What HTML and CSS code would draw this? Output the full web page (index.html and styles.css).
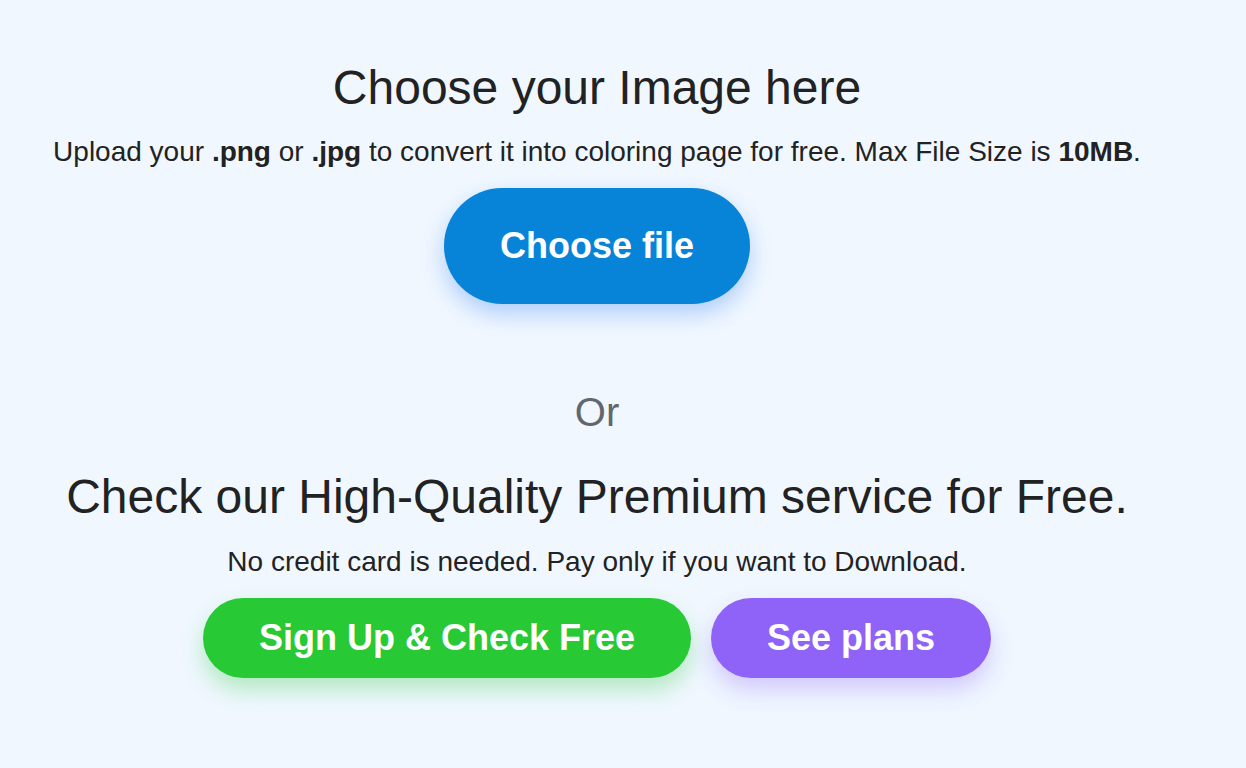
FILE: index.html
```html
<!DOCTYPE html>
<html lang="en">
<head>
<meta charset="utf-8">
<title>Choose your Image here</title>
<link rel="stylesheet" href="styles.css">
</head>
<body>
<main class="page">
  <section class="upload">
    <h1 class="title">Choose your Image here</h1>
    <p class="lead">Upload your <b>.png</b> or <b>.jpg</b> to convert it into coloring page for free. Max File Size is <b>10MB</b>.</p>
    <button class="btn btn-blue" type="button">Choose file</button>
  </section>
  <p class="or">Or</p>
  <section class="premium">
    <h2 class="title">Check our High-Quality Premium service for Free.</h2>
    <p class="lead lead-2">No credit card is needed. Pay only if you want to Download.</p>
    <div class="actions">
      <a class="btn btn-green" href="#">Sign Up &amp; Check Free</a>
      <a class="btn btn-purple" href="#">See plans</a>
    </div>
  </section>
</main>
</body>
</html>
```
FILE: styles.css
```css
html, body {
  margin: 0;
  padding: 0;
  background: #f0f7ff;
}
body {
  font-family: "Liberation Sans", Arial, Helvetica, sans-serif;
  color: #222222;
}
.page {
  width: 1194px;
  padding-top: 60px;
  display: flex;
  flex-direction: column;
  align-items: center;
  text-align: center;
}
.upload, .premium {
  display: flex;
  flex-direction: column;
  align-items: center;
}
.title {
  margin: 0;
  font-size: 48px;
  font-weight: 400;
  line-height: 1.15;
  color: #222222;
  white-space: nowrap;
}
.lead {
  margin: 21px 0 0;
  font-size: 28px;
  line-height: 1.15;
  white-space: nowrap;
}
.lead b { font-weight: 700; }
.lead-2 { margin-top: 21px; }
.btn {
  display: inline-block;
  border: none;
  border-radius: 999px;
  font-family: "Liberation Sans", Arial, Helvetica, sans-serif;
  font-size: 36px;
  font-weight: 700;
  line-height: 42px;
  color: #ffffff;
  text-decoration: none;
  cursor: pointer;
  white-space: nowrap;
}
.btn-blue {
  margin-top: 20px;
  padding: 37px 56px;
  background: #0784d7;
  box-shadow: 0 10px 22px rgba(40, 120, 240, 0.32);
}
.or {
  margin: 85px 0 0;
  font-size: 40px;
  line-height: 1.15;
  color: #62666d;
}
.premium { margin-top: 34px; }
.actions {
  margin-top: 20px;
  display: flex;
  gap: 20px;
  padding-bottom: 40px;
}
.btn-green {
  padding: 19px 56px;
  background: #27c934;
  box-shadow: 0 12px 22px rgba(39, 201, 52, 0.3);
}
.btn-purple {
  padding: 19px 56px;
  background: #8f62f8;
  box-shadow: 0 12px 22px rgba(143, 98, 248, 0.3);
}
```
